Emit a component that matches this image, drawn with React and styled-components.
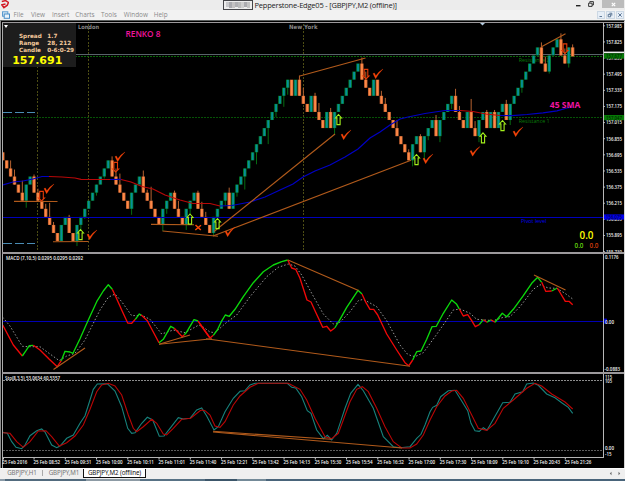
import React from "react";
import styled, { createGlobalStyle } from "styled-components";

const Global = createGlobalStyle`
  html, body { margin: 0; padding: 0; background: #f0f0f0; overflow: hidden; }
  * { box-sizing: border-box; }
`;

const ui = `"Open Sans", "Noto Sans", sans-serif`;

const Window = styled.div`
  width: 625px;
  height: 481px;
  display: flex;
  flex-direction: column;
  background: #efefef;
  font-family: ${ui};
  overflow: hidden;
`;

const TitleBar = styled.header`
  height: 10px;
  flex: none;
  display: grid;
  grid-template-columns: 223px 1fr 58px;
  background: #ececec;
`;

const Brand = styled.div`
  padding: 0 0 0 1px;
  display: flex;
`;

const Caption = styled.div`
  display: flex;
  align-items: center;
  gap: 1.5px;
  font-size: 7.5px;
  letter-spacing: -0.21px;
  line-height: 10px;
  color: #1c1c1c;
  white-space: pre;
`;

const Account = styled.span`
  width: 30px;
  height: 10px;
  border: 1px solid #454549;
  background: #ededed;
  display: flex;
  align-items: center;
  justify-content: center;
`;

const WindowButtons = styled.div`
  display: flex;
  height: 8px;
  margin-left: -4px;
`;

const WindowButton = styled.div`
  width: ${(p) => (p.$close ? 22 : 12.5)}px;
  flex: none;
  background: ${(p) => (p.$close ? "#bcbcbc" : "transparent")};
  margin-left: ${(p) => (p.$close ? 14 : 0)}px;
  display: flex;
  align-items: center;
  justify-content: center;
  transform: ${(p) => (p.$close ? "none" : "translateX(9px)")};
`;

const MenuBar = styled.nav`
  height: 10px;
  flex: none;
  display: flex;
  align-items: center;
  background: #f2f2f2;
  padding-left: 2px;
`;

const MenuItem = styled.span`
  width: ${(p) => p.$w}px;
  font-size: 6.4px;
  line-height: 10px;
  color: #8a8a8a;
`;

const MenuIcon = styled.span`
  width: 11.5px;
  display: flex;
`;

const MdiButtons = styled.div`
  margin-left: auto;
  margin-right: 1px;
  display: flex;
  gap: 1px;
`;

const MdiButton = styled.span`
  width: 8.5px;
  height: 8px;
  border: 1px solid #ccd8e4;
  background: #e6eef7;
  display: flex;
  align-items: center;
  justify-content: center;
`;

const ChartFrame = styled.main`
  height: 448px;
  flex: none;
  background: #000;
  border-left: 1px solid #8c8c8c;
  border-right: 1px solid #d5d5d5;
  border-top: 1px solid #5b5f5e;
  padding-left: 1px;
  padding-top: 1px;
  display: flex;
  flex-direction: column;
`;

const Panel = styled.section`
  position: relative;
  height: ${(p) => p.$h}px;
  flex: none;
  display: grid;
  grid-template-columns: 602px 1fr;
  border-top: ${(p) => p.$top}px solid #9c999c;
`;

const Plot = styled.div`
  border-left: 1px solid #aaa;
  border-right: 1px solid #b8b8b8;
  height: 100%;
  overflow: hidden;
`;

const Drawing = styled.svg`
  display: block;
  overflow: ${(p) => (p.$clip ? "hidden" : "visible")};
`;

const TimeAxis = styled.div`
  height: 11px;
  flex: none;
  border-top: 1px solid #b4b4b4;
  border-left: 1px solid #aaa;
  margin-right: 20px;
`;

const InfoBox = styled.aside`
  position: absolute;
  left: 1px;
  top: 0;
  width: 73px;
  height: 44px;
  padding: 10.2px 0 0 16px;
  background: #1d1d1d;
  font-family: "DejaVu Sans", sans-serif;
  font-weight: bold;
  color: #f5c99c;
`;

const InfoToggle = styled.span`
  position: absolute;
  left: 1px;
  top: 2px;
  border: 2px solid transparent;
  border-top: 3px solid #fff;
  border-bottom: 0;
`;

const InfoRow = styled.div`
  display: grid;
  grid-template-columns: 28.3px 1fr;
  font-size: 5.7px;
  line-height: 6.9px;
  white-space: nowrap;
`;

const InfoPrice = styled.div`
  margin: 0.9px 0 0 -6.8px;
  font-size: 11px;
  line-height: 12px;
  color: #ffff00;
`;

const TabBar = styled.footer`
  height: 11px;
  flex: none;
  display: flex;
  align-items: flex-start;
  background: #efefef;
  border-top: 1px solid #fafafa;
`;

const Tab = styled.span`
  width: ${(p) => p.$w}px;
  height: 9px;
  text-align: center;
  font-family: "Noto Sans", sans-serif;
  font-size: 6.2px;
  letter-spacing: -0.12px;
  line-height: 8.5px;
  white-space: nowrap;
  padding-left: ${(p) => (p.$active ? 0 : 2)}px;
  color: ${(p) => (p.$active ? "#111" : "#777")};
  background: ${(p) => (p.$active ? "#fff" : "transparent")};
  border-style: solid;
  border-color: ${(p) => (p.$active ? "#111" : "#999")};
  border-width: ${(p) => (p.$active ? "0 1px 1px 1px" : "0")};
`;

const TabDivider = styled.span`
  width: 1px;
  height: 6px;
  margin-top: 1px;
  background: #aaa;
`;

const TabArrows = styled.span`
  margin-left: auto;
  padding-right: 4px;
  display: flex;
  gap: 6px;
  padding-top: 1.5px;
`;

const Taskbar = styled.div`
  flex: 1;
  background: linear-gradient(90deg, #8b9ba8 0 5px, #526b7e 5px 86px, #8d9ba5 86px 140px, #587285 140px 205px, #3c566a 205px 237px, #748a98 237px 266px, #49647a 266px);
`;

/* ---------- data ---------- */

const STEP = 3.903;
const BOX = 8.07;
const TOP = 152.3;

// Alternating run lengths of falling and rising bricks, beginning with a fall.
const RUNS = [
  6, 2, 7, 2, 2, 9, 5, 3, 5, 3, 3, 3, 4, 4, 1, 15, 1, 1, 3, 1, 3, 1, 1, 7, 3, 1,
  9, 2, 1, 3, 1, 4, 3, 1, 2, 2, 1, 1, 1, 2, 1, 8, 2, 3, 2, 1, 1,
];

const WICKS = {
  2: 8, 3: 7, 5: 12, 6: 7, 8: 2, 9: 4, 11: 5, 12: 14, 13: 3, 17: 2, 19: 5, 20: 5,
  21: 2, 24: 3, 26: 2, 28: 4, 29: 8, 30: 11, 33: 6, 36: 6, 37: 3, 38: 14, 41: 6,
  42: 5, 44: 2, 45: 8, 47: 5, 48: 5, 50: 2, 51: 7, 52: 5, 54: 3, 57: 5, 58: 5,
  60: 4, 62: 13, 65: 12, 68: 16, 70: 5, 72: 11, 73: 7, 76: 4, 77: 8, 80: 3, 81: 9,
  84: 4, 85: 6, 92: 6, 93: 8, 97: 5, 98: 6, 101: 8, 104: 3, 105: 6, 107: 2, 108: 8,
  109: 4, 111: 5, 112: 6, 115: 5, 116: 7, 117: 6, 120: 13, 121: 7, 122: 6, 124: 2,
  126: 2, 129: 4, 130: 5, 133: 5, 138: 5, 139: 7, 140: 2, 143: 6, 144: 7, 145: 4, 146: 3,
};

const bricks = (() => {
  const out = [];
  let close = 0;
  let i = 0;
  RUNS.forEach((n, r) => {
    const up = r % 2 === 1;
    for (let k = 0; k < n; k++) {
      const len = k === 0 && r > 0 ? 2 : 1;
      const top = up ? close - len : close;
      out.push({ i, up, top, len });
      close += up ? -len : len;
      i++;
    }
  });
  return out;
})();

// Samples are stored at three units per pixel, relative to an origin.
const scale = (ox, oy, pts) =>
  pts.map(([x, y]) => `${(ox + x / 3).toFixed(1)},${(oy + y / 3).toFixed(1)}`).join(" ");
const join = (oy, ...parts) => parts.map(([ox, pts]) => scale(ox, oy, pts)).join(" ");

const SMA = [
  ["b", "3,185 13,182 23,181 33,179 42,176.5 49,176.5"],
  ["r", "49,176.5 62,177 75,178 81,179.3 110,179.5"],
  ["b", "110,179.5 121,179.3"],
  ["r", "121,179.5 131,182 142,186.5 153,189 165,195 180,200 193,203.5 210,203.5 220,206"],
  ["b", "220,206 232,205.5 250,202 265,197 280,190 293,184 303,177 315,171 330,165 345,157 358,149 370,138 380,132 390,125 400,119 408,117 425,113.5 445,110.5 460,110.5"],
  ["r", "460,110.5 473,111.5 486,114 500,115.5"],
  ["b", "500,115.5 512,115.6 527,114.5 543,112.8 557,110.8 567,108 573,107"],
];

const MACD = [
  [0, "r", [[8, 225], [40, 285], [67, 318]]],
  [0, "g", [[67, 318], [78, 302], [88, 287], [100, 286]]],
  [0, "r", [[100, 286], [120, 300], [148, 328], [172, 350], [184, 332]]],
  [0, "g", [[184, 332], [195, 304], [210, 306], [219, 310], [240, 266], [265, 210], [290, 155], [310, 123], [325, 104], [337, 118]]],
  [0, "r", [[337, 118], [345, 135], [365, 180], [383, 219], [395, 220], [406, 208]]],
  [0, "g", [[406, 208], [418, 192], [424, 195]]],
  [0, "r", [[424, 195], [442, 212], [477, 278]]],
  [0, "g", [[477, 278], [490, 268], [500, 250], [512, 229], [523, 235]]],
  [0, "r", [[523, 235], [547, 260], [553, 254]]],
  [0, "g", [[553, 254], [559, 248], [582, 209], [594, 213]]],
  [0, "r", [[594, 213], [629, 263]]],
  [200, "r", [[0, 222], [30, 264], [40, 256]]],
  [200, "g", [[40, 256], [52, 240], [64, 215], [76, 195], [88, 199], [105, 178], [130, 140], [160, 98], [190, 65], [220, 45], [245, 35], [263, 30]]],
  [200, "r", [[263, 30], [275, 54], [287, 58], [300, 85], [321, 150], [333, 156], [345, 182], [368, 232], [380, 229], [392, 243], [404, 234]]],
  [200, "g", [[404, 234], [416, 215], [440, 172], [474, 121], [486, 132]]],
  [200, "r", [[486, 132], [498, 158], [510, 178], [521, 178], [533, 195], [560, 252], [590, 300], [615, 338], [626, 347]]],
  [410, "r", [[-4, 347], [0, 342], [8, 330]]],
  [410, "g", [[8, 330], [20, 305], [33, 303], [50, 268], [66, 230], [79, 229], [100, 190], [125, 150], [140, 163], [148, 177]]],
  [410, "r", [[148, 177], [160, 198], [173, 194], [185, 212], [196, 230], [208, 224]]],
  [410, "g", [[208, 224], [220, 209]]],
  [410, "r", [[220, 209], [231, 217]]],
  [410, "g", [[231, 217], [243, 209]]],
  [410, "r", [[243, 209], [255, 217]]],
  [410, "g", [[255, 217], [277, 190], [290, 200], [310, 178], [340, 137], [365, 100], [383, 82], [395, 97]]],
  [410, "r", [[395, 97], [407, 124], [425, 123]]],
  [410, "g", [[425, 123], [442, 114]]],
  [410, "r", [[442, 114], [466, 154], [477, 154], [488, 164]]],
];

const MACD_SIGNAL = join(
  250,
  [0, [[8, 202], [30, 228], [67, 289], [85, 290], [120, 290], [150, 312], [178, 332], [200, 318], [225, 310], [255, 270], [280, 220], [300, 180], [325, 142], [345, 132], [365, 155], [395, 197], [425, 196], [450, 208], [485, 252], [520, 240], [555, 248], [595, 226]]],
  [200, [[5, 228], [30, 246], [45, 248], [80, 217], [110, 195], [150, 140], [200, 80], [235, 52], [265, 42], [285, 48], [305, 75], [335, 130], [370, 192], [400, 222], [420, 217], [450, 185], [475, 152], [490, 148], [530, 170], [560, 212], [600, 285], [622, 312]]],
  [410, [[0, 316], [15, 320], [40, 308], [75, 260], [110, 210], [130, 180], [150, 177], [180, 190], [200, 208], [250, 212], [280, 202], [300, 200], [330, 170], [370, 118], [390, 104], [415, 114], [440, 115], [465, 130], [488, 147]]]
);

const STO_MAIN = join(
  370,
  [0, [[8, 187], [22, 190], [35, 215], [48, 232], [65, 236], [75, 225], [90, 197], [110, 182], [125, 177], [135, 186], [155, 225], [170, 233], [180, 228], [200, 205], [220, 195], [240, 160], [255, 137], [270, 90], [280, 58], [292, 42], [322, 41], [345, 63], [365, 110], [383, 175], [395, 190], [405, 188], [425, 160], [442, 142], [458, 150], [478, 199], [492, 198], [510, 175], [535, 143], [550, 147], [570, 145], [590, 120]]],
  [200, [[5, 114], [20, 138], [42, 180], [55, 170], [75, 125], [100, 85], [120, 64], [135, 62], [150, 45], [165, 40], [262, 40], [275, 52], [287, 54], [305, 80], [322, 122], [333, 130], [350, 180], [370, 206], [382, 196], [395, 210], [410, 190], [425, 145], [435, 115], [452, 70], [474, 43], [490, 62], [520, 115], [550, 200], [580, 230], [600, 233]]],
  [410, [[0, 230], [20, 205], [33, 193], [45, 165], [60, 125], [68, 112], [80, 106], [92, 80], [115, 62], [135, 61], [150, 85], [173, 122], [183, 160], [195, 182], [208, 184], [220, 173], [231, 181], [250, 148], [278, 98], [300, 97], [315, 72], [338, 65], [350, 42], [370, 39], [385, 46], [410, 72], [435, 83], [455, 98], [475, 112], [488, 130]]]
);

const STO_SIGNAL = join(
  370,
  [0, [[8, 188], [30, 190], [50, 215], [70, 232], [90, 215], [115, 183], [138, 182], [155, 200], [178, 228], [200, 218], [225, 198], [250, 165], [270, 118], [290, 65], [305, 45], [325, 40], [345, 48], [365, 75], [385, 135], [400, 175], [410, 185], [430, 170], [455, 148], [470, 160], [490, 192], [500, 195], [520, 175], [545, 148], [572, 145], [600, 122]]],
  [200, [[5, 120], [15, 122], [30, 135], [45, 168], [60, 172], [75, 155], [100, 105], [120, 78], [150, 52], [175, 40], [265, 40], [300, 58], [320, 90], [345, 145], [375, 200], [395, 206], [415, 190], [430, 150], [450, 95], [470, 58], [487, 50], [505, 65], [530, 115], [555, 170], [580, 215], [605, 234]]],
  [410, [[0, 234], [20, 222], [40, 195], [60, 150], [80, 110], [105, 78], [125, 63], [140, 61], [160, 85], [185, 135], [205, 175], [230, 181], [255, 160], [280, 115], [310, 90], [350, 55], [375, 40], [395, 48], [425, 72], [465, 96], [488, 117]]]
);

const PRICE_TRENDS = [
  [14, 201.3, 57.5, 201.5], [53, 241.8, 88.5, 241.5], [151, 224.4, 194, 224.7],
  [162.5, 231, 218, 236.3], [214, 231.5, 335, 134], [213, 236, 411, 160.3],
  [299, 76.3, 365.5, 58], [541.5, 46.7, 565.5, 33.7],
];
const MACD_TRENDS = [
  [53.5, 369.5, 85, 348], [159, 344.3, 190, 335], [159, 344.3, 212, 338.8],
  [206, 338.8, 410, 366.3], [288, 260, 358.5, 290.5], [534, 275, 565.5, 290],
];
const STO_TRENDS = [[213, 431.3, 331, 439.3], [213, 432, 402, 448]];

const UP_ARROWS = [[80.5, 229], [190, 213.5], [217.5, 218], [338.5, 114], [416.5, 154], [483, 132.3], [502.5, 120]];
const DOWN_ARROWS = [[41.5, 191], [115.7, 162], [366, 69], [565, 43.5]];
const CHECKS = [[44, 184], [115, 152], [87, 230], [225, 227], [341, 130], [373, 69], [423, 154], [470, 146.5], [513, 127]];

const PRICES = ["157.985", "157.825", "157.655", "157.495", "157.335", "157.175", "157.015", "156.855", "156.695", "156.535", "156.375", "156.215", "156.055", "155.895", "155.730"];
const TIMES = ["2016", "08:52", "09:31", "10:00", "10:11", "11:01", "11:40", "12:21", "13:42", "14:13", "15:30", "15:54", "16:32", "17:00", "17:30", "18:09", "19:10", "20:43", "21:26"];

/* ---------- chart parts ---------- */

const Label = ({ x, y, w, size = 5.6, fill = "#f4f4f4", children, family = "Open Sans", weight }) => (
  <text
    x={x} y={y} fill={fill} fontSize={size} fontWeight={weight}
    fontFamily={`"${family}", "Open Sans", sans-serif`} textLength={w} lengthAdjust="spacingAndGlyphs"
  >
    {children}
  </text>
);

const AxisLabel = (props) => <Label size={6} family="Liberation Sans Narrow" weight="600" {...props} />;

const Trends = ({ lines }) =>
  lines.map(([x1, y1, x2, y2], i) => (
    <line key={i} x1={x1} y1={y1} x2={x2} y2={y2} stroke="#b15a1b" strokeWidth="1.15" />
  ));

const Level = ({ y, color, dash, width = 1 }) => (
  <line x1="3" x2="603" y1={y} y2={y} stroke={color} strokeDasharray={dash} strokeWidth={width} shapeRendering="crispEdges" />
);

const Brick = ({ i, up, top, len }) => {
  const x = 2.8 + i * STEP;
  const y = TOP + top * BOX;
  const last = i === 146;
  const h = last ? 9 : len * BOX;
  const wick = WICKS[i] || 0;
  return (
    <g>
      {wick > 0 && (
        <rect x={x - 0.5} y={up ? y : y - wick} width="1" height={h + wick} fill={up ? "#066b12" : "#b5612f"} />
      )}
      <rect x={x - 1.7} y={y} width="3.4" height={h} fill={up ? "#04802e" : "#c46231"} />
      <rect x={x - 0.85} y={y + 0.3} width="1.8" height={h - 0.6} fill={up ? "#068f9c" : "#ff8a48"} />
    </g>
  );
};

function PriceChart() {
  return (
    <Drawing width="600" height="229" viewBox="3 23 600 229" $clip>
      {[37.5, 88.5, 303.5].map((x) => (
        <line key={x} x1={x} x2={x} y1="24" y2="252" stroke="#4d4d14" strokeDasharray="2 1.5" shapeRendering="crispEdges" />
      ))}
      <Level y={54.5} color="#59636a" />
      <Level y={56.5} color="#086508" dash="2 1" />
      <Level y={117.5} color="#065206" dash="2 1" />
      <line x1="3" x2="35" y1="112.5" y2="112.5" stroke="#4a8cb4" strokeDasharray="9 3" />
      <line x1="3" x2="35" y1="243.5" y2="243.5" stroke="#4a8cb4" strokeDasharray="9 3" />

      <Label x={78} y={29.2} w={21} size={5.8} fill="#888" family="DejaVu Sans" weight="bold">London</Label>
      <Label x={289} y={29.2} w={28.5} size={5.8} fill="#888" family="DejaVu Sans" weight="bold">New York</Label>
      <Label x={125.5} y={36.7} w={35} size={8} fill="#f0149c" weight="600">RENKO 8</Label>
      <Label x={518.7} y={61.5} w={31} size={6} fill="#087c08">Resistance 2</Label>
      <Label x={518.7} y={123.4} w={31} size={6} fill="#087c08">Resistance 1</Label>
      <Label x={521} y={222.8} w={25.5} size={6} fill="#0000ee">Pivot level</Label>

      {bricks.map((b) => <Brick key={b.i} {...b} />)}
      <Level y={217.5} color="#0000bc" />
      {SMA.map(([c, pts], i) => (
        <polyline key={i} points={pts} fill="none" stroke={c === "r" ? "#b80808" : "#0000c4"} strokeWidth="1.2" />
      ))}
      <Trends lines={PRICE_TRENDS} />

      {UP_ARROWS.map(([x, y], i) => (
        <path key={i} transform={`translate(${x} ${y})`} d="M0 .5 3 4H1.6V10.6H-1.6V4H-3Z" fill="none" stroke="#a4f01c" strokeWidth="1.1" />
      ))}
      {DOWN_ARROWS.map(([x, y], i) => (
        <path key={i} transform={`translate(${x} ${y})`} d="M-1.8 .4H1.8V7H3L0 10 -3 7H-1.8Z" fill="none" stroke="#e53b08" strokeWidth="1.1" />
      ))}
      {CHECKS.map(([x, y], i) => (
        <path key={i} transform={`translate(${x} ${y})`} d="M0 4.6 1.4 4 2.8 6.8Q5.5 2.6 10 0 5.8 4.2 2.6 9.7Z" fill="#f84408" stroke="#f84408" strokeWidth=".3" />
      ))}
      <path d="M195.5 225 200.8 230M201 225.2 195.3 230" stroke="#fa4604" strokeWidth="1.5" fill="none" />

      <Label x={549.8} y={108.2} w={30.5} size={8} fill="#f014a0" weight="bold">45 SMA</Label>
      <Label x={579.5} y={238.6} w={14} size={10} fill="#ffff00" weight="600">0.0</Label>
      <Label x={574.5} y={248.2} w={9} size={6.5} fill="#62d20c" weight="600">0.0</Label>
      <Label x={589.5} y={248.2} w={9} size={6.5} fill="#d13a0a" weight="600">0.0</Label>
      <path d="M480 23h5l-2.5 2.6Z" fill="#b3cbe0" />
    </Drawing>
  );
}

function PriceAxis() {
  return (
    <Drawing width="20" height="229" viewBox="604 23 20 229">
      {PRICES.map((p, i) => {
        const y = 25.3 + i * 16.13;
        return (
          <g key={p}>
            <rect x="603" y={y} width="1.8" height="1" fill="#ccc" />
            <AxisLabel x={606} y={y + 2.4} w={16}>{p}</AxisLabel>
          </g>
        );
      })}
      <rect x="604" y="51.6" width="20" height="1.6" fill="#eee" />
      {[[53.4, "157.677", "#067a06", "#002800"], [115, "157.047", "#067a06", "#002800"], [214.4, "156.075", "#0000f0", "#00004a"]].map(([y, t, bg, ink]) => (
        <g key={y}>
          <rect x="604" y={y} width="20" height="5.2" fill={bg} />
          <AxisLabel x={606} y={y + 4.7} w={16} fill={ink}>{t}</AxisLabel>
        </g>
      ))}
    </Drawing>
  );
}

function MacdChart() {
  return (
    <Drawing width="600" height="118" viewBox="3 254 600 118" $clip>
      <Label x={6} y={260.4} w={77} weight="600">MACD (7,10,5) 0.0295 0.0295 0.0292</Label>
      <Level y={321.5} color="#0000b4" />
      <polyline points={MACD_SIGNAL} fill="none" stroke="#a8a8a8" strokeWidth="0.9" strokeDasharray="1.5 2" />
      {MACD.map(([ox, c, pts], i) => (
        <polyline key={i} points={scale(ox, 250, pts)} fill="none" stroke={c === "r" ? "#f00808" : "#0bd80b"} strokeWidth="1.35" strokeLinejoin="round" />
      ))}
      <Trends lines={MACD_TRENDS} />
    </Drawing>
  );
}

function StochasticChart() {
  return (
    <Drawing width="600" height="83" viewBox="3 374 600 83" $clip>
      <Level y={380.5} color="#8c8c8c" dash="2 1" />
      <Level y={450.5} color="#5c5c5c" dash="2 1" />
      <Label x={5} y={379.6} w={55} size={5.4} weight="600">Sto(8,3,5) 53.0634 60.5357</Label>
      <polyline points={STO_MAIN} fill="none" stroke="#17827c" strokeWidth="1.1" />
      <polyline points={STO_SIGNAL} fill="none" stroke="#b80606" strokeWidth="1.1" />
      <Trends lines={STO_TRENDS} />
    </Drawing>
  );
}

export default function App() {
  return (
    <Window>
      <Global />
      <TitleBar>
        <Brand>
          <svg width="8" height="9" viewBox="0 0 8 9">
            <path d="M.8 1.5 4.6.6 7.4 2.4 6.3 5.2 2.9 7.6.8 4.8 4.5 3.9" fill="none" stroke="#d21925" strokeWidth="1.5" />
          </svg>
        </Brand>
        <Caption>
          <Account>
            <svg width="24" height="6" viewBox="0 0 24 6">
              {["#c9c9cc", "#aaaaae", "#c4c2c2", "#b0b0b3", "#bbb", "#cecece", "#ababaf", "#c3c3c3"].map((c, i) => (
                <rect key={i} x={i * 3} y="0" width="3" height={i % 3 ? 6 : 5} fill={c} />
              ))}
            </svg>
          </Account>
          Pepperstone-Edge05 - [GBPJPY,M2 (offline)]
        </Caption>
        <WindowButtons>
          <WindowButton>
            <svg width="5" height="6"><rect y="4" width="4.5" height="1.4" fill="#222" /></svg>
          </WindowButton>
          <WindowButton>
            <svg width="6" height="6" viewBox="0 0 6 6"><path d="M1.8 1.8V.6H5.4V4H4.2M.6 2.2H4.1V5.4H.6Z" fill="none" stroke="#222" strokeWidth=".9" /></svg>
          </WindowButton>
          <WindowButton $close>
            <svg width="5" height="5" viewBox="0 0 5 5"><path d="M.8.8 4.2 4.2M4.2.8.8 4.2" stroke="#fff" strokeWidth="1.2" /></svg>
          </WindowButton>
        </WindowButtons>
      </TitleBar>

      <MenuBar>
        <MenuIcon>
          <svg width="8" height="8" viewBox="0 0 8 8">
            <rect x=".5" y=".8" width="5.3" height="4.4" fill="#d7e9f6" stroke="#5a9bcf" />
            <rect x="2.2" y="3" width="5.3" height="4.3" fill="#eaf4fb" stroke="#4a8dc6" />
          </svg>
        </MenuIcon>
        {[["File", 17.5], ["View", 21], ["Insert", 23.2], ["Charts", 25.8], ["Tools", 22.8], ["Window", 30], ["Help", 20]].map(([t, w]) => (
          <MenuItem key={t} $w={w}>{t}</MenuItem>
        ))}
        <MdiButtons>
          {["M1.5 4.5H4", "M2.4 1.2H4.8V3.6M1.2 2.4H3.6V4.8H1.2Z", "M1.3 1.3 4.7 4.7M4.7 1.3 1.3 4.7"].map((d) => (
            <MdiButton key={d}>
              <svg width="6" height="6" viewBox="0 0 6 6"><path d={d} fill="none" stroke="#506c8c" strokeWidth=".9" /></svg>
            </MdiButton>
          ))}
        </MdiButtons>
      </MenuBar>

      <ChartFrame>
        <Panel $h={230} $top={1}>
          <Plot><PriceChart /></Plot>
          <PriceAxis />
          <InfoBox>
            <InfoToggle />
            <InfoRow><span>Spread</span><span>1.7</span></InfoRow>
            <InfoRow><span>Range</span><span>28, 212</span></InfoRow>
            <InfoRow><span>Candle</span><span>0-6:0-29</span></InfoRow>
            <InfoPrice>157.691</InfoPrice>
          </InfoBox>
        </Panel>
        <Panel $h={120} $top={2}>
          <Plot><MacdChart /></Plot>
          <Drawing width="20" height="118" viewBox="604 254 20 118">
            <rect x="604" y="318.6" width="3" height="5" fill="#0000c8" />
            <AxisLabel x={605} y={259.4} w={13.5}>0.1176</AxisLabel>
            <AxisLabel x={605} y={323.7} w={9}>0.00</AxisLabel>
            <AxisLabel x={604.6} y={371.2} w={15.5}>-0.0883</AxisLabel>
          </Drawing>
        </Panel>
        <Panel $h={85} $top={2}>
          <Plot><StochasticChart /></Plot>
          <Drawing width="20" height="83" viewBox="604 374 20 83">
            <AxisLabel x={605} y={378.8} w={7}>115</AxisLabel>
            <AxisLabel x={605} y={383.4} w={7}>105</AxisLabel>
            <AxisLabel x={605} y={450.2} w={9}>0.00</AxisLabel>
            <AxisLabel x={605} y={456.2} w={6.5}>-15</AxisLabel>
          </Drawing>
        </Panel>
        <TimeAxis>
          <Drawing width="600" height="10" viewBox="3 458 600 10">
            {TIMES.map((t, i) => (
              <g key={t}>
                <rect x={i ? 2.3 + i * 31.25 : 3} y="458" width="1" height="1.5" fill="#ccc" />
                <Label x={i ? 2.2 + i * 31.25 : 2.2} y={464.3} w={i ? 26.7 : 25} size={5.6} weight="600">{`25 Feb ${t}`}</Label>
              </g>
            ))}
          </Drawing>
        </TimeAxis>
      </ChartFrame>

      <TabBar>
        <Tab $w={42}>GBPJPY,H1</Tab>
        <TabDivider />
        <Tab $w={40}>GBPJPY,M1</Tab>
        <Tab $w={63} $active>GBPJPY,M2 (offline)</Tab>
        <TabArrows>
          <svg width="3" height="5" viewBox="0 0 3 5"><path d="M2.5 .8V4.2L.8 2.5Z" fill="#666" /></svg>
          <svg width="3" height="5" viewBox="0 0 3 5"><path d="M.5 .8V4.2L2.2 2.5Z" fill="#666" /></svg>
        </TabArrows>
      </TabBar>
      <Taskbar />
    </Window>
  );
}
